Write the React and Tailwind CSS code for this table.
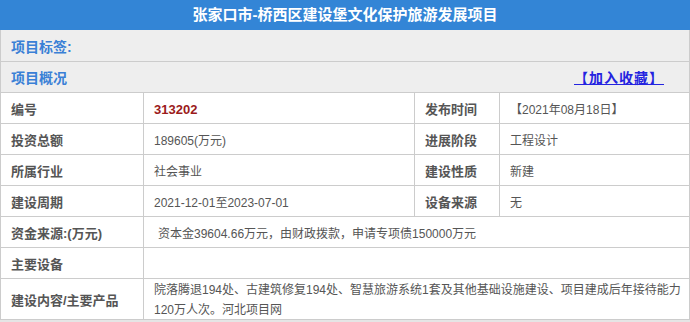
const FONT = "font-['Liberation_Sans','Noto_Sans_CJK_SC',sans-serif]"

const ROWS = [
  ['编号', '313202', '发布时间', '【2021年08月18日】'],
  ['投资总额', '189605(万元)', '进展阶段', '工程设计'],
  ['所属行业', '社会事业', '建设性质', '新建'],
  ['建设周期', '2021-12-01至2023-07-01', '设备来源', '无'],
]

function Label({ children, className = '' }) {
  return (
    <div className={`flex items-center bg-white pl-[10px] pt-[4px] text-[13px] font-bold text-[#555] ${className}`}>
      {children}
    </div>
  )
}

function Value({ children, className = '' }) {
  return (
    <div className={`flex items-center bg-white pl-[10px] pt-[4px] text-[12px] text-[#555] ${className}`}>
      {children}
    </div>
  )
}

export default function App() {
  return (
    <div className={`w-[690px] bg-white ${FONT}`}>
      {/* Title bar */}
      <div className="flex h-[30px] items-center justify-center bg-[#3385d6] text-[15px] font-bold text-white">
        张家口市-桥西区建设堡文化保护旅游发展项目
      </div>

      <div className="border-x border-[#ccc]">
        <div className="flex h-[32px] items-center border-b border-[#ccc] bg-[#eee] pl-[10px] pt-[4px] text-[14px] font-bold text-[#3a80d6]">
          项目标签:
        </div>
        <div className="flex h-[31px] items-center justify-between border-b border-[#ccc] bg-[#eee] pl-[10px] pr-[25px] pt-[3px]">
          <span className="text-[14px] font-bold text-[#3a80d6]">项目概况</span>
          <a href="#" className="text-[14px] font-bold tracking-[1px] text-[#2424e0] underline">
            【加入收藏】
          </a>
        </div>

        {/* Detail table */}
        <div className="grid grid-cols-[142px_270px_84px_189px] grid-rows-[repeat(6,30px)_40px] gap-px border-b border-[#ccc] bg-[#ccc]">
          {ROWS.map(([l1, v1, l2, v2], i) => (
            <div key={l1} className="contents">
              <Label>{l1}</Label>
              <Value className={i === 0 ? 'text-[13px] font-bold !text-[#9b1b1b]' : ''}>{v1}</Value>
              <Label>{l2}</Label>
              <Value>{v2}</Value>
            </div>
          ))}

          <Label>资金来源:(万元)</Label>
          <Value className="col-span-3 pl-[14px]">资本金39604.66万元，由财政拨款，申请专项债150000万元</Value>

          <Label>主要设备</Label>
          <Value className="col-span-3" />

          <Label>建设内容/主要产品</Label>
          <div className="col-span-3 bg-white pl-[10px] pr-[2px] pt-[1px] text-[12px] leading-[20px] text-[#555]">
            院落腾退194处、古建筑修复194处、智慧旅游系统1套及其他基础设施建设、项目建成后年接待能力120万人次。河北项目网
          </div>
        </div>
      </div>
      <div className="h-[2px] bg-[#e5e5e5]" />
    </div>
  )
}
